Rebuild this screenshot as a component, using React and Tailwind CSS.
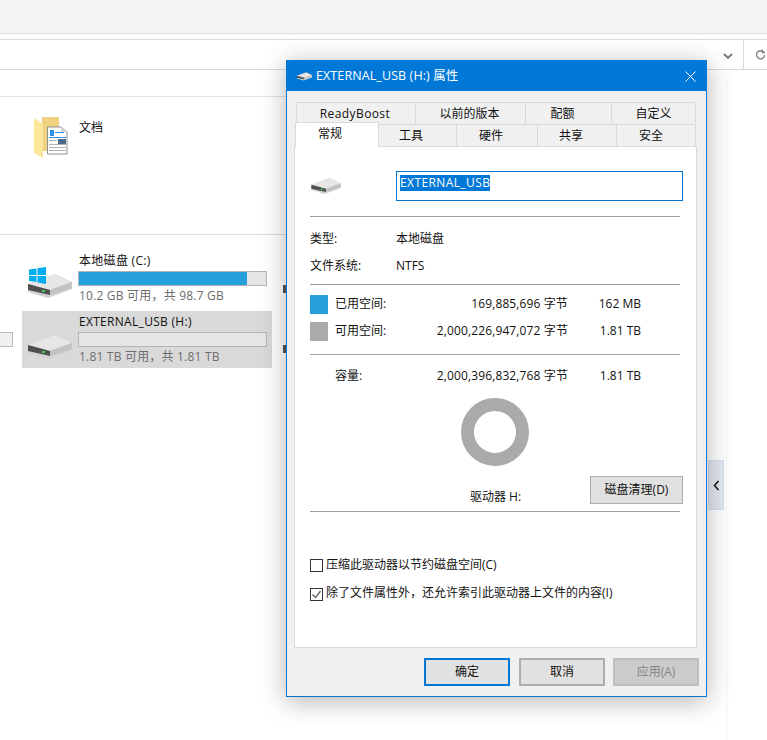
import React from "react";

function Drive({ className }) {
  return (
    <svg viewBox="0 0 44 24" className={`shrink-0 ${className}`}>
      <polygon points="0,10 27,0 44,8 44,15 20,24 0,18" fill="#d2d2d2" />
      <polygon points="0,10 27,0 44,8 22,16" fill="#e6e6e6" />
      <polygon points="0,10 22,16 22,21 0,16" fill="#4f4f4f" />
      <polygon points="22,16 44,8 44,14 22,21" fill="#c2c2c2" />
      <rect x="14" y="16" width="3" height="2" fill="#3fcf5a" />
    </svg>
  );
}

function WinLogo() {
  return (
    <svg viewBox="0 0 17 17" className="w-[17px] h-[17px]">
      <polygon points="0,2.5 7.5,1.4 7.5,8 0,8" fill="#00adef" />
      <polygon points="8.5,1.2 17,0 17,8 8.5,8" fill="#00adef" />
      <polygon points="0,9 7.5,9 7.5,15 0,14" fill="#00adef" />
      <polygon points="8.5,9 17,9 17,17 8.5,15.6" fill="#00adef" />
    </svg>
  );
}

function DocFolder() {
  return (
    <svg viewBox="0 0 36 42" className="w-[36px] h-[42px]">
      <polygon points="9,0 26,0 26,34 9,34" fill="#f0d282" />
      <polygon points="1,1 10,7 10,41 1,36" fill="#fde79a" />
      <polygon points="14.5,10 28,10 34,15 34,37 14.5,37" fill="#ffffff" stroke="#8f8f8f" />
      <polygon points="28,10 34,15 28,15" fill="#d8d8d8" />
      <rect x="17" y="13" width="4" height="6" fill="#2f8fe0" />
      <rect x="22" y="15" width="9" height="1" fill="#2f8fe0" />
      <rect x="16" y="20" width="17" height="1" fill="#2f8fe0" />
      <rect x="16" y="23" width="8" height="1" fill="#b0b0b0" />
      <rect x="25" y="22" width="8" height="5" fill="#4c6a8a" />
      <rect x="16" y="27" width="17" height="1" fill="#b0b0b0" />
      <rect x="16" y="30" width="17" height="1" fill="#b0b0b0" />
      <rect x="16" y="33" width="17" height="1" fill="#b0b0b0" />
    </svg>
  );
}

function Tab({ w, children }) {
  return (
    <div className={`${w} h-full shrink-0 flex items-center justify-center border-r border-[#d9d9d9] text-[#111]`}>
      {children}
    </div>
  );
}

function StatRow({ swatch, label, bytes, size, className }) {
  return (
    <div className={`flex items-center h-[19px] ${className}`}>
      <div className={`w-[18px] h-[19px] ${swatch}`} />
      <div className="ml-[7px] w-[60px] pb-[2px]">{label}</div>
      <div className="w-[173px] text-right pb-[2px] tracking-[0.12px]">{bytes}</div>
      <div className="w-[73px] text-right pb-[2px]">{size}</div>
    </div>
  );
}

function Btn({ w, className, children }) {
  return (
    <div className={`${w} h-[28px] flex items-center justify-center border-2 bg-[#e1e1e1] ${className}`}>
      {children}
    </div>
  );
}

function DriveTile({ name, free, fill, selected, logo }) {
  return (
    <div className={`relative flex w-[250px] h-[57px] ${selected ? "bg-[#d9d9d9]" : ""}`}>
      <div className="w-[56px] shrink-0 flex items-end pl-[6px] pb-[9px]">
        <Drive className="w-[44px] h-[24px]" />
      </div>
      {logo && <div className="absolute left-[7px] top-[17px]"><WinLogo /></div>}
      <div className="flex flex-col">
        <div className="h-[21px] pt-[2px] pl-[1px] text-[#111] leading-[18px] tracking-[0.3px]">{name}</div>
        <div className="w-[189px] h-[15px] border border-[#b4b4b4] bg-[#e6e6e6]">
          <div className={`h-full bg-[#26a0da] ${fill}`} />
        </div>
        <div className="pl-[1px] mt-[1px] text-[#6d6d6d] leading-[18px] tracking-[0.2px]">{free}</div>
      </div>
    </div>
  );
}

export default function App() {
  return (
    <div className="relative w-[767px] h-[740px] overflow-hidden bg-white text-[12px] text-[#111] font-['Open_Sans','Noto_Sans_CJK_SC',sans-serif]">
      {/* Explorer */}
      <div className="h-[34px] bg-[#f4f5f7] border-b border-[#dcdcdc]" />
      <div className="h-[6px] border-b border-[#dcdcdc]" />
      <div className="h-[30px] border-b border-[#d9d9d9] flex justify-end">
        <div className="w-[24px] flex items-center justify-center pr-[6px] pt-[2px]">
          <svg viewBox="0 0 10 6" className="w-[10px] h-[6px]"><path d="M1 1l4 4 4-4" fill="none" stroke="#777" strokeWidth="1.8" /></svg>
        </div>
        <div className="w-[24px] border-l border-[#d9d9d9] flex items-center pl-[11px]">
          <svg viewBox="0 0 12 12" className="w-[11px] h-[11px] shrink-0"><path d="M9.5 3.5A4.4 4.4 0 1 0 10.5 6.5M8 0.8v3h3" fill="none" stroke="#808080" strokeWidth="1.4" /></svg>
        </div>
      </div>
      <div className="h-[27px] w-[300px] border-b border-[#e3e3e3]" />
      <div className="flex w-[300px] h-[138px] border-b border-[#dcdcdc]">
        <div className="ml-[33px] mt-[20px]"><DocFolder /></div>
        <div className="ml-[10px] mt-[22px] leading-[18px]">文档</div>
      </div>
      <div className="ml-[22px] mt-[15px] flex flex-col gap-[4px]">
        <DriveTile name="本地磁盘 (C:)" free="10.2 GB 可用，共 98.7 GB" fill="w-[90%]" logo />
        <DriveTile name="EXTERNAL_USB (H:)" free="1.81 TB 可用，共 1.81 TB" fill="w-0" selected />
      </div>

      {/* Overlays on the explorer */}
      <div className="absolute left-0 top-[332px] w-[13px] h-[15px] bg-[#f0f0f0] border border-l-0 border-[#b9b9b9]" />
      <div className="absolute left-[283px] top-[285px] w-[3px] h-[8px] bg-[#555]" />
      <div className="absolute left-[283px] top-[345px] w-[3px] h-[8px] bg-[#555]" />
      <div className="absolute left-[726px] top-[77px] bottom-0 w-px bg-[#f4f4f4]" />
      <div className="absolute left-[708px] top-[460px] w-[16px] h-[50px] bg-[#e4e8ef] border border-[#cfe0f2] flex items-center justify-center">
        <svg viewBox="0 0 7 11" className="w-[7px] h-[11px]"><path d="M5.5 1L1.5 5.5l4 4.5" fill="none" stroke="#111" strokeWidth="1.5" /></svg>
      </div>

      {/* Properties dialog */}
      <div className="absolute left-[286px] top-[60px] w-[421px] h-[637px] flex flex-col bg-[#f0f0f0] border border-[#0078d7] shadow-[0_4px_24px_rgba(0,0,0,0.3)]">
        <div className="h-[30px] shrink-0 bg-[#0078d7] flex items-center text-white text-[12.5px]">
          <Drive className="ml-[10px] w-[15px] h-[9px]" />
          <div className="ml-[4px] tracking-[0.1px]">EXTERNAL_USB (H:) 属性</div>
          <svg viewBox="0 0 11 11" className="ml-auto mr-[10px] w-[11px] h-[11px]"><path d="M0.5 0.5l10 10M10.5 0.5l-10 10" stroke="#fff" strokeWidth="1" fill="none" /></svg>
        </div>

        <div className="relative mt-[11px] ml-[9px] w-[399px] h-[44px] shrink-0">
          <div className="flex h-[22px] border-t border-l border-[#d9d9d9]">
            <Tab w="w-[119px] pr-[2px] tracking-[0.4px]">ReadyBoost</Tab>
            <Tab w="w-[110px] pr-[2px]">以前的版本</Tab>
            <Tab w="w-[86px] pr-[12px]">配额</Tab>
            <Tab w="w-[84px]">自定义</Tab>
          </div>
          <div className="flex h-[22px] border-t border-l border-[#d9d9d9]">
            <div className="w-[82px] shrink-0" />
            <Tab w="w-[78px] pr-[13px]">工具</Tab>
            <Tab w="w-[81px] pr-[12px]">硬件</Tab>
            <Tab w="w-[79px] pr-[12px]">共享</Tab>
            <Tab w="w-[79px] pr-[10px]">安全</Tab>
          </div>
          <div className="absolute -left-[1px] top-[20px] z-10 w-[84px] h-[25px] bg-white border border-b-0 border-[#d9d9d9] flex items-center justify-center pb-[3px] pr-[14px]">常规</div>
        </div>

        <div className="ml-[7px] w-[403px] h-[502px] shrink-0 bg-white border border-[#d9d9d9] px-[15px] flex flex-col">
          <div className="flex items-center h-[69px] pt-[9px] shrink-0">
            <Drive className="ml-[1px] w-[30px] h-[16px]" />
            <div className="ml-[55px] w-[287px] h-[30px] shrink-0 border border-[#0078d7] pl-[3px] pt-[2px]">
              <span className="inline-block h-[16px] leading-[16px] bg-[#0078d7] text-white tracking-[0.4px]">EXTERNAL_USB</span>
            </div>
          </div>
          <div className="h-px bg-[#a0a0a0] w-[370px] shrink-0" />
          <div className="flex h-[18px] mt-[13px] items-center"><div className="w-[86px]">类型:</div><div>本地磁盘</div></div>
          <div className="flex h-[18px] mt-[9px] items-center"><div className="w-[86px]">文件系统:</div><div>NTFS</div></div>
          <div className="h-px bg-[#a0a0a0] w-[370px] mt-[9px] shrink-0" />
          <StatRow swatch="bg-[#26a0da]" label="已用空间:" bytes="169,885,696 字节" size="162 MB" className="mt-[10px]" />
          <StatRow swatch="bg-[#aaaaaa]" label="可用空间:" bytes="2,000,226,947,072 字节" size="1.81 TB" className="mt-[8px]" />
          <div className="h-px bg-[#a0a0a0] w-[370px] mt-[13px] shrink-0" />
          <div className="flex h-[19px] mt-[11px] items-center">
            <div className="ml-[25px] w-[60px]">容量:</div>
            <div className="w-[173px] text-right tracking-[0.12px]">2,000,396,832,768 字节</div>
            <div className="w-[73px] text-right">1.81 TB</div>
          </div>
          <div className="relative h-[114px] shrink-0 mt-[13px]">
            <svg viewBox="0 0 68 68" className="absolute left-[151px] top-0 w-[68px] h-[68px]">
              <circle cx="34" cy="34" r="27.5" fill="none" stroke="#aaaaaa" strokeWidth="13" />
            </svg>
            <div className="absolute left-[160px] top-[90px] leading-[18px]">驱动器 H:</div>
            <div className="absolute left-[280px] top-[78px] w-[93px] h-[28px] flex items-center justify-center border border-[#adadad] bg-[#e1e1e1]">磁盘清理(D)</div>
          </div>
          <div className="h-px bg-[#a0a0a0] w-[370px] -mt-[1px] shrink-0" />
          <div className="flex items-center h-[18px] mt-[44px]">
            <div className="w-[13px] h-[13px] border border-[#333] bg-white" />
            <div className="ml-[3px]">压缩此驱动器以节约磁盘空间(C)</div>
          </div>
          <div className="flex items-center h-[18px] mt-[10px]">
            <div className="w-[13px] h-[13px] mt-[2px] border border-[#333] bg-white flex items-center justify-center">
              <svg viewBox="0 0 11 11" className="w-[11px] h-[11px]"><path d="M1.5 5.5l3 3 5-6.5" fill="none" stroke="#666" strokeWidth="1.4" /></svg>
            </div>
            <div className="ml-[3px]">除了文件属性外，还允许索引此驱动器上文件的内容(I)</div>
          </div>
        </div>

        <div className="flex justify-end gap-[8px] mt-[10px] mr-[7px]">
          <Btn w="w-[86px] mr-[1px]" className="border-[#0078d7]">确定</Btn>
          <Btn w="w-[86px]" className="border-[#adadad]">取消</Btn>
          <Btn w="w-[86px]" className="border-[#bfbfbf] !bg-[#cccccc] text-[#838383]">应用(A)</Btn>
        </div>
      </div>
    </div>
  );
}
